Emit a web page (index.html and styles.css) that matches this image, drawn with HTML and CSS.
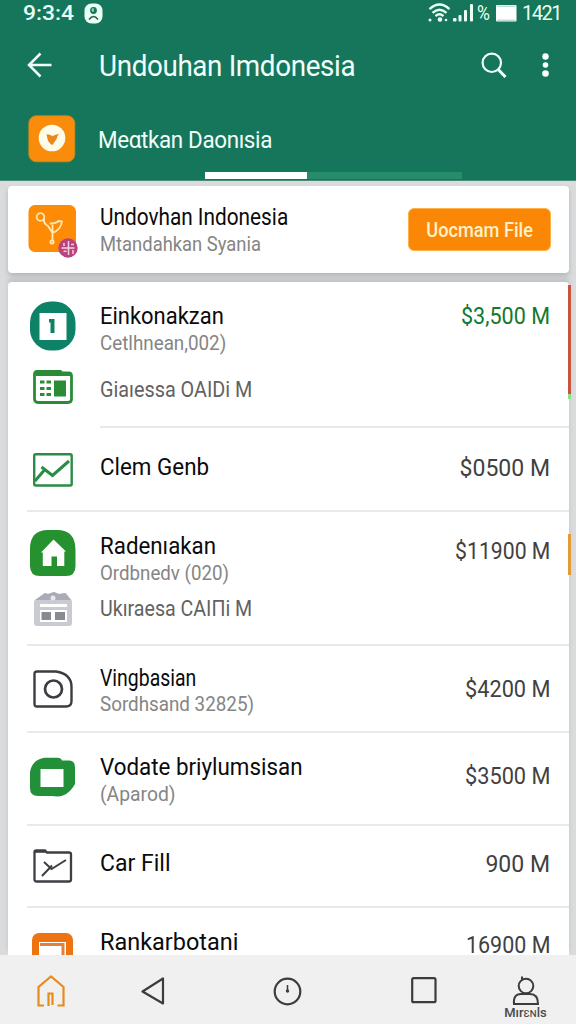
FILE: index.html
```html
<!DOCTYPE html>
<html lang="id">
<head>
<meta charset="utf-8">
<title>Undouhan Indonesia</title>
<link rel="stylesheet" href="styles.css">
</head>
<body>
<div class="screen">
  <header class="header">
    <div class="status">
      <span class="clock">9:3:4</span>
      <svg class="status-badge" width="19" height="21" viewBox="0 0 19 21"><rect x=".5" y=".5" width="18" height="20" rx="7" fill="#e9fff5"/><circle cx="9.5" cy="7.5" r="3.4" fill="#15775b"/><path d="M9 5v4M7.500 7h2" stroke="#e9fff5" stroke-width=".8"/><path d="M5 16.500q4.500-6 9 0" fill="none" stroke="#345c50" stroke-width="1.500"/></svg>
      <span class="status-spacer"></span>
      <svg class="wifi" width="23" height="20" viewBox="0 0 23 20" fill="none" stroke="#e9fff5" stroke-width="2.400"><path d="M1.500 6.200Q11.500-3 21.500 6.200"/><path d="M4.500 9.800Q11.500 3.500 18.500 9.800"/><path d="M7.500 13.200Q11.500 9.500 15.500 13.200"/><g fill="#e9fff5" stroke="none"><circle cx="2" cy="17" r="1.500"/><circle cx="12" cy="16.500" r="2.300"/><circle cx="18" cy="17" r="1.300"/></g></svg>
      <svg class="signal" width="21" height="18" viewBox="0 0 21 18" fill="#e9fff5"><rect x="0" y="14" width="3.500" height="3.500" rx="1"/><rect x="5.500" y="11" width="3" height="6.500" rx="1"/><rect x="11" y="6" width="3" height="11.500" rx="1"/><rect x="17" y="0" width="3" height="17.500" rx="1"/></svg>
      <span class="percent">%</span>
      <svg class="battery" width="21" height="18" viewBox="0 0 21 18"><rect x="0" y="1" width="20.500" height="16.500" rx="1" fill="#fff"/><path d="M1 2.200H19.500M1 16.200H19.500" stroke="#8fc0af" stroke-width=".8"/></svg>
      <span class="charge">1421</span>
    </div>
    <div class="appbar">
      <svg class="back" width="26" height="26" viewBox="0 0 26 26" fill="none" stroke="#f1fffa" stroke-width="2.500"><path d="M13.500 1.500 2 13l11.500 11.500M2 13h22.500"/></svg>
      <h1 class="page-title">Undouhan Imdonesia</h1>
      <svg class="search" width="26" height="27" viewBox="0 0 26 27" fill="none" stroke="#f1fffa"><circle cx="10.800" cy="10.800" r="9.200" stroke-width="2.200"/><path d="M17.200 17.500 24.500 25" stroke-width="3"/></svg>
      <svg class="more" width="8" height="26" viewBox="0 0 8 26" fill="#fff"><circle cx="4.500" cy="4.500" r="3.200"/><circle cx="4.500" cy="13" r="2.800"/><circle cx="4.500" cy="21.500" r="3.300"/></svg>
    </div>
    <div class="profile">
      <svg width="48" height="48" viewBox="0 0 48 48"><rect x=".8" y=".8" width="46" height="46" rx="7.500" fill="#f98c0b" stroke="#c98a1c" stroke-width=".8"/><circle cx="24" cy="23" r="13.300" fill="#fffbea"/><path d="M18.500 19.500q1.500-1 4 .8l2.500.8q3-2.500 6-1.800-2 1-2.300 4.500l-4.200 6.200-2-1q-3-2.500-3.200-6z" fill="#e8891b"/></svg>
      <span class="profile-name">Meαtkan Daonısia</span>
    </div>
    <div class="progress"><span class="progress-value"></span></div>
  </header>

  <main class="content">
    <section class="card promo">
      <svg class="promo-icon" width="52" height="54" viewBox="0 0 52 54"><rect x=".5" y="1" width="47.500" height="47" rx="6.500" fill="#fd8b06"/><g fill="none" stroke="#ffe9b4" stroke-width="1.800" stroke-linejoin="round" stroke-linecap="round"><circle cx="12.500" cy="13" r="3.800"/><path d="M16.300 13.500Q14.500 19 20 22L24.500 29Q33 25.500 34 17.500L30.500 17Q28 19.500 22.500 19.500M24.500 29v7M24.500 21.500V28"/><circle cx="24" cy="38" r="1.600"/></g><circle cx="40" cy="44" r="9.700" fill="#b8437e"/><path d="M33.500 44h13M40.500 37v14M36 39v3M45 46v4M35.500 47.500l3-.5M43 40.500l3 0" stroke="#f6d0de" stroke-width="1.500"/></svg>
      <div class="promo-text">
        <h2 class="title w-promo">Undovhan Indonesia</h2>
        <p class="sub w-promo-sub">Mtandahkan Syania</p>
      </div>
      <button class="button"><span class="button-label">Uocmam File</span></button>
    </section>

    <section class="card list">
      <article class="row row-balance">
        <div class="icons">
          <svg width="46" height="50" viewBox="0 0 46 50"><rect x="0" y=".5" width="45.500" height="49" rx="21" fill="#0d8266"/><rect x="9.500" y="12" width="27" height="27" fill="#fff"/><path d="M19 18h5.500v14h-4V21.500H19z" fill="#0d8266"/></svg>
          <svg width="40" height="34" viewBox="0 0 40 34"><path d="M4 1.500H27.500L29 3H35.500Q38.500 3 38.500 6V29Q38.500 32.500 35 32.500H5Q1.500 32.500 1.500 29V4Q1.500 1.500 4 1.500Z" fill="#fff" stroke="#2b8c38" stroke-width="2.800"/><path d="M3 2H28V4H37V6H3Z" fill="#2b8c38"/><path d="M21 10.500h12v16H21zM7 10.500h4.500v3H7zM13.500 10.500H18v3h-4.500zM7 17h4.500v3H7zM13.500 17H18v3h-4.500zM7 23h4.500v3H7zM13.500 23H18v3h-4.500z" fill="#2b8c38"/></svg>
        </div>
        <div class="body">
          <h3 class="title w-a1">Einkonakzan</h3>
          <p class="sub w-a2">Cetlhnean,002)</p>
          <p class="detail w-a3">Giaıessa OAIDi M</p>
        </div>
        <span class="amount amount-positive w-pa">$3,500 M</span>
      </article>
      <article class="row row-chart">
        <div class="icons">
          <svg width="40" height="34" viewBox="0 0 40 34" fill="none" stroke="#2b8c45"><rect x="1.200" y="1.200" width="37.500" height="31.300" rx="1.500" stroke-width="2.400"/><path d="M2 28 11 17.500M8.500 14l11 8.500L36 8" stroke-width="3"/></svg>
        </div>
        <div class="body"><h3 class="title w-b1">Clem Genb</h3></div>
        <span class="amount">$0500 M</span>
      </article>
      <article class="row row-house">
        <div class="icons">
          <svg width="46" height="46" viewBox="0 0 46 46"><path d="M18 0H27Q45.500 0 45.500 20V36Q45.500 46 36 46H10Q0 46 0 36V19Q0 0 18 0Z" fill="#26912f"/><path d="M23.500 9.500 36 21.500H34.300V36H27V26.500H21.500V36H12.800V22.500H11Z" fill="#fff"/></svg>
          <svg width="40" height="36" viewBox="0 0 40 36"><path d="M1 10 12 2l3 1 6-2 5 2 7-1 6 8v22q0 3-3 3H4q-3 0-3-3Z" fill="#c9cad2"/><path d="M2 9 12 2l3 1 6-2 5 2 6-1 6 7Z" fill="#a9abb5"/><path d="M7 13h27v3H7zM7 19h27v12H7z" fill="#fff"/><path d="M8.500 21h9.500v8H8.500zM22 21h10v8H22z" fill="#888a93"/><circle cx="20" cy="7" r="2.500" fill="#e8e9ee"/></svg>
        </div>
        <div class="body">
          <h3 class="title w-c1">Radenıakan</h3>
          <p class="sub w-c2">Ordbnedv (020)</p>
          <p class="detail w-c3">Ukıraesa CAIΠi M</p>
        </div>
        <span class="amount w-pc">$11900 M</span>
      </article>
      <article class="row row-camera">
        <div class="icons">
          <svg width="40" height="38" viewBox="0 0 40 38" fill="none" stroke="#3c3d42"><path d="M4 1.500H23Q38.500 4 38.500 17V31Q38.500 36.500 33 36.500H4Q1.500 36.500 1.500 34V4Q1.500 1.500 4 1.500Z" stroke-width="2.400"/><circle cx="20.500" cy="19" r="8.500" stroke-width="2.700"/></svg>
        </div>
        <div class="body">
          <h3 class="title w-d1">Vingbasian</h3>
          <p class="sub w-d2">Sordhsand 32825)</p>
        </div>
        <span class="amount w-pd">$4200 M</span>
      </article>
      <article class="row row-update">
        <div class="icons">
          <svg width="46" height="40" viewBox="0 0 46 40"><path d="M14 .8H27Q31 .5 32 3.500H39Q45 4 45 10V27Q40 36 33 38.500 29 40 22 39H8Q0 39 0 31V15Q2 3 14 .8Z" fill="#229039"/><rect x="10.500" y="12" width="23" height="18" fill="#fff"/></svg>
        </div>
        <div class="body">
          <h3 class="title w-e1">Vodate briylumsisan</h3>
          <p class="sub w-e2">(Aparod)</p>
        </div>
        <span class="amount w-pd">$3500 M</span>
      </article>
      <article class="row row-folder">
        <div class="icons">
          <svg width="40" height="34" viewBox="0 0 40 34" fill="none" stroke="#3e3f45"><path d="M3 1.500H12L14 3.500H36Q38 3.500 38 5.500V30.500Q38 32.500 36 32.500H3.500Q1.500 32.500 1.500 30.500V3Q1.500 1.500 3 1.500Z" stroke-width="2.300"/><path d="M2 2.800H13.500" stroke-width="2"/><path d="M9 27 19 16.500M11 13l7.500 7L33 11" stroke-width="2"/></svg>
        </div>
        <div class="body"><h3 class="title">Car Fill</h3></div>
        <span class="amount">900 M</span>
      </article>
      <article class="row row-last">
        <div class="icons">
          <svg width="42" height="34" viewBox="0 0 42 34"><rect x="0" y="0" width="41" height="44" rx="7" fill="#ed7411"/><path d="M7 34V9H34V34" fill="#fff"/><path d="M8 11.500H31V34" fill="none" stroke="#e2813b" stroke-width="3"/></svg>
        </div>
        <div class="body"><h3 class="title w-g1">Rankarbotani</h3></div>
        <span class="amount w-pg">16900 M</span>
      </article>
      <i class="marker marker-red"></i>
      <i class="marker marker-orange"></i>
    </section>
  </main>

  <nav class="nav">
    <a class="nav-item"><svg width="28" height="32" viewBox="0 0 28 32" fill="none" stroke="#e98b19" stroke-width="2.200"><path d="M7 30.500H1.500V12L14 1.500 26.500 12V30.500H20.500M11.500 31V18.500H16.500M15.500 19V30"/></svg></a>
    <a class="nav-item"><svg width="24" height="28" viewBox="0 0 24 28" fill="none" stroke="#3c3c3f" stroke-width="2.200" stroke-linejoin="round"><path d="M22 1.500V26.500L1.500 14.500Z"/></svg></a>
    <a class="nav-item"><svg width="29" height="29" viewBox="0 0 29 29"><circle cx="14.500" cy="14.500" r="12.800" fill="none" stroke="#3c3c3f" stroke-width="2.200"/><path d="M14.500 8v7" stroke="#3c3c3f" stroke-width="1.500"/><circle cx="14.500" cy="14" r="1.700" fill="#3c3c3f"/></svg></a>
    <a class="nav-item"><svg width="26" height="27" viewBox="0 0 26 27"><rect x="1.200" y="1.200" width="23.300" height="24" rx="1.500" fill="none" stroke="#3c3c3f" stroke-width="2.200"/></svg></a>
    <a class="nav-item nav-account"><svg width="28" height="30" viewBox="0 0 28 30" fill="none" stroke="#3c3c3f" stroke-width="2"><circle cx="14" cy="10" r="7.300"/><path d="M10 3.500V.5M2 28Q1 18 9 18H18Q26 18 26 28Z"/></svg><span class="nav-label">Mırɛɴls</span></a>
  </nav>
</div>
</body>
</html>
```
FILE: styles.css
```css
* { box-sizing: border-box; }
body { margin: 0; font-family: Roboto, "Liberation Sans", sans-serif; }
h1, h2, h3, p { margin: 0; font-weight: 400; white-space: nowrap; }
svg { display: block; flex: none; }
.screen { width: 576px; height: 1024px; display: flex; flex-direction: column; overflow: hidden; background: #d9dbdd; }

.header { height: 181px; background: #15765b; color: #f1fffa; border-bottom: 1px solid #4b8c79; flex: none; }
.status { height: 26px; display: flex; align-items: center; padding: 0 15px 0 23px; color: #e9fff5; }
.clock { width: 61px; font-size: 21px; font-weight: 500; transform: scaleX(1.09); transform-origin: left; }
.status-spacer { flex: 1; }
.wifi { margin-right: 2px; }
.signal { margin-right: 3px; }
.percent { width: 19px; font-size: 20px; transform: scaleX(.88); transform-origin: left; }
.battery { margin-right: 5px; }
.charge { width: 39px; font-size: 20px; letter-spacing: -1.500px; }
.appbar { height: 78px; display: flex; align-items: center; padding: 0 27px; }
.page-title { flex: 1; margin-left: 46px; font-size: 30px; letter-spacing: -.4px; transform: scaleX(.927); transform-origin: left; }
.search { margin-right: 34px; }
.profile { height: 68px; display: flex; align-items: center; padding: 2px 0 0 28px; gap: 22px; }
.profile-name { padding-top: 2px; font-size: 24px; letter-spacing: -.4px; white-space: nowrap; transform: scaleX(.935); transform-origin: left; }
.progress { width: 257px; height: 7px; margin-left: 205px; background: #278c6c; }
.progress-value { display: block; width: 102px; height: 7px; background: #fff; }

.content { flex: 1; min-height: 0; padding: 5px 7px 0 8px; display: flex; flex-direction: column; gap: 9px; }
.card { background: #fff; box-shadow: 0 3px 5px #b5b7b9; flex: none; }
.promo { position: relative; z-index: 1; height: 87px; border-radius: 4px; display: flex; align-items: flex-start; padding: 18px 18px 0 20px; }
.promo-text { flex: 1; padding-left: 20px; }
.button { width: 143px; height: 43px; margin-top: 4px; padding: 0; border: 1px solid #ffb04a; border-radius: 6px; background: #fb8706; color: #fff1c9; font: 500 21px Roboto, sans-serif; white-space: nowrap; }
.button-label { display: inline-block; transform: scaleX(.865); }
.title { font-size: 23px; line-height: 28px; color: #0b0b0b; }
.sub { font-size: 20px; line-height: 24px; color: #858585; }
.detail { font-size: 22px; line-height: 26px; color: #626262; }
.title, .sub, .detail { transform-origin: left; }
.amount { font-size: 23px; line-height: 28px; color: #414141; transform-origin: right; }
.amount-positive { color: #14782f; }

/* Condensed text widths */
.w-promo { transform: scaleX(.904); }
.w-promo-sub { transform: scaleX(.92); }
.w-a1 { transform: scaleX(.955); }
.w-a2 { transform: scaleX(.94); }
.w-a3 { transform: scaleX(.9); }
.w-b1 { transform: scaleX(.973); }
.w-c1 { transform: scaleX(.97); }
.w-c2 { transform: scaleX(.935); }
.w-c3 { transform: scaleX(.892); }
.w-d1 { transform: scaleX(.845); }
.w-d2 { transform: scaleX(.94); }
.w-e1 { transform: scaleX(.972); }
.w-e2 { transform: scaleX(.965); }
.w-g1 { transform: scaleX(1.02); }
.w-pa { transform: scaleX(.937); }
.w-pc { transform: scaleX(.922); }
.w-pd { transform: scaleX(.944); }
.w-pg { transform: scaleX(.935); }

.list { position: relative; height: 673px; border-radius: 4px 4px 0 0; box-shadow: 0 -4px 4px #c3c5c7; }
.row { display: grid; grid-template-columns: 73px 1fr auto; padding: 0 19px; align-items: start; position: relative; }
.row::after { content: ""; position: absolute; left: 19px; right: 0; bottom: 0; height: 2px; background: #e9e9ea; }
.icons { width: 51px; display: flex; flex-direction: column; align-items: center; }
.row-balance { height: 146px; padding-top: 21px; }
.row-balance::after { left: 92px; }
.row-balance .icons { margin-top: -2px; gap: 19px; }
.row-balance .detail { margin-top: 22px; }
.row-chart { height: 84px; padding-top: 26px; }
.row-chart .icons { margin-top: -1px; }
.row-chart .amount { padding-top: 1px; }
.row-house { height: 134px; padding-top: 21px; }
.row-house .icons { margin-top: -3px; gap: 15px; }
.row-house .detail { margin-top: 11px; }
.row-house .amount { padding-top: 5px; }
.row-camera { height: 87px; padding-top: 19px; }
.row-camera .icons { padding-top: 5px; }
.row-camera .sub { margin-top: -1px; }
.row-camera .amount { padding-top: 11px; }
.row-update { height: 93px; padding-top: 21px; }
.row-update .icons { padding-top: 3px; }
.row-update .amount { padding-top: 9px; }
.row-folder { height: 82px; padding-top: 24px; }
.row-folder .icons { margin-top: -1px; }
.row-folder .amount { padding-top: 1px; }
.row-last { height: 47px; padding-top: 22px; }
.row-last .title { line-height: 26px; }
.row-last .icons { padding-top: 3px; height: 25px; overflow: hidden; }
.row-last .amount { line-height: 18px; padding-top: 7px; }
.row-last::after { display: none; }
.marker { position: absolute; right: -2px; width: 3px; }
.marker-red { top: 3px; height: 114px; background: linear-gradient(#c8543c 109px, #8fe08a 109px); }
.marker-orange { top: 252px; height: 41px; background: #e39a38; }

.nav { height: 69px; flex: none; background: #f0f0f0; display: grid; grid-template-columns: 101px 103px 167px 106px 97px; }
.nav-item { display: flex; flex-direction: column; align-items: center; padding-top: 22px; }
.nav-item:first-child { padding-top: 20px; }
.nav-account { padding-top: 21px; }
.nav-label { font-size: 13px; font-weight: 500; line-height: 14px; color: #4a4a4a; }
```
